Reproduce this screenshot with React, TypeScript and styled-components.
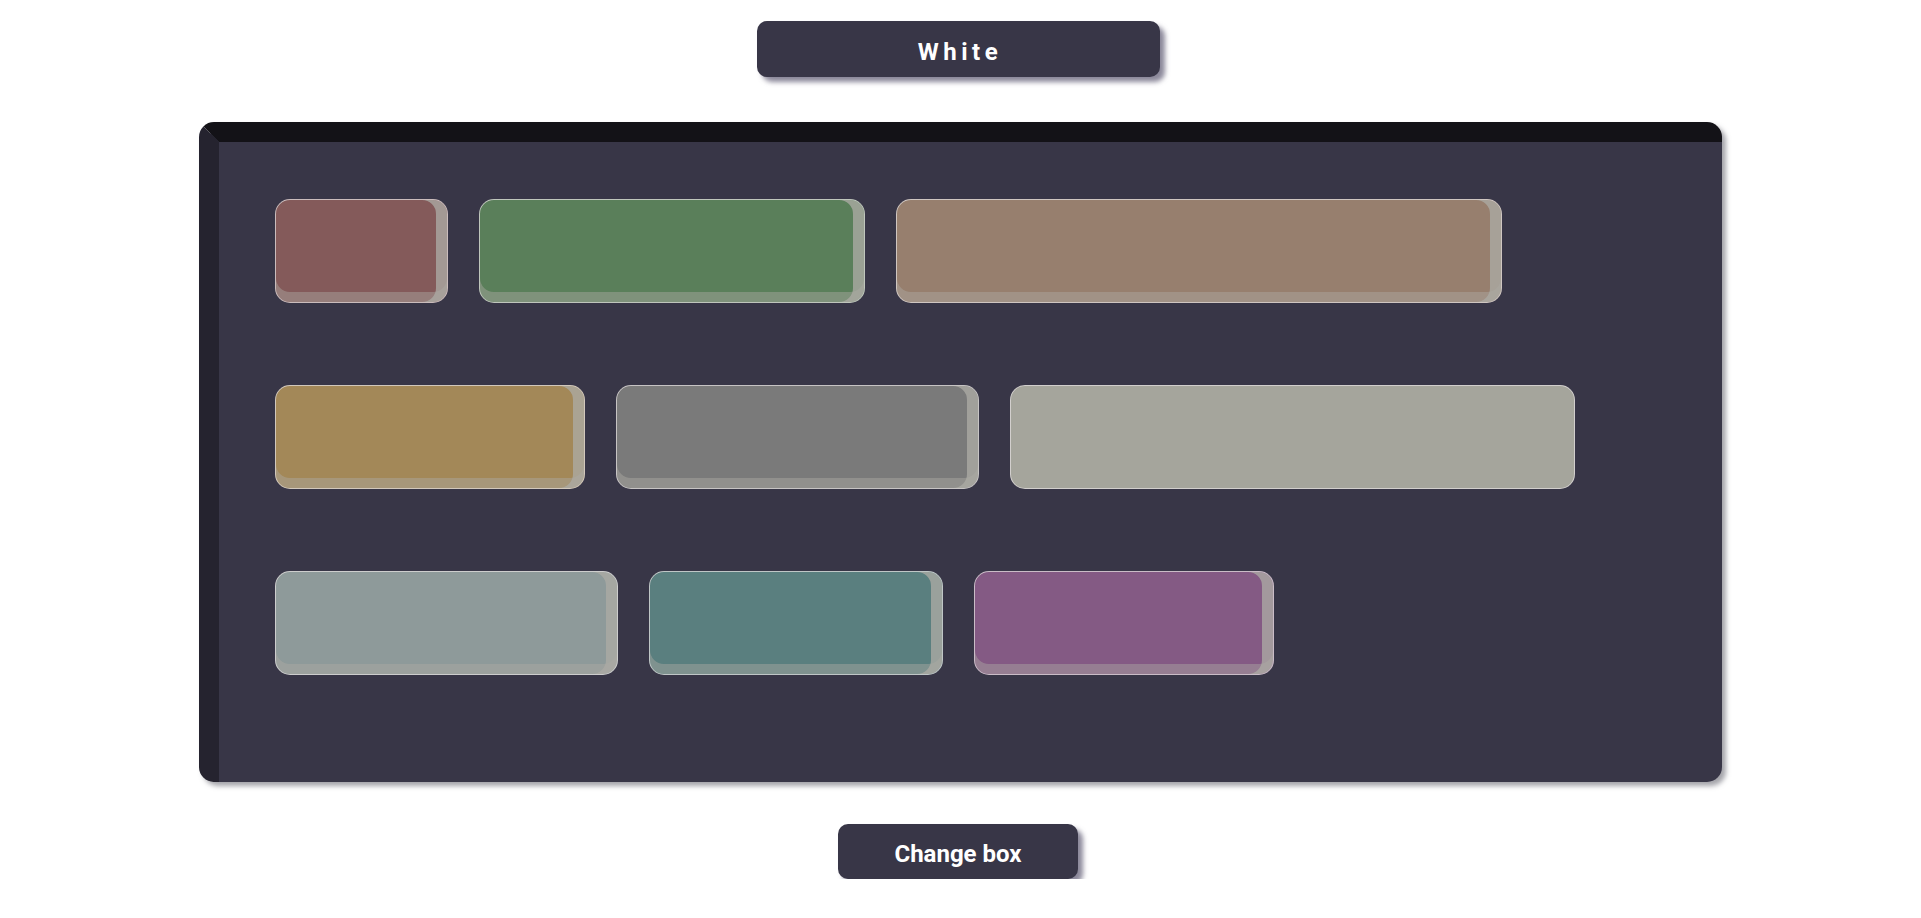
import React from "react";
import styled, { createGlobalStyle } from "styled-components";

const GlobalStyle = createGlobalStyle`
  html, body { margin: 0; padding: 0; background: #ffffff; }
  body { font-family: Roboto, "Liberation Sans", sans-serif; }
`;

const Page = styled.div`
  display: flex;
  flex-direction: column;
  align-items: center;
  padding-top: 21px;
`;

const TopButton = styled.button`
  width: 403px;
  height: 56px;
  margin-right: 5px;
  padding: 5px 0 0 4px;
  border: none;
  border-radius: 10px;
  background: #383647;
  color: #ffffff;
  font-family: Roboto, "Liberation Sans", sans-serif;
  font-weight: 700;
  font-size: 24px;
  letter-spacing: 4.5px;
  box-shadow: 5px 5px 5px rgba(100, 96, 120, 0.75);
  cursor: pointer;
`;

const Panel = styled.div`
  box-sizing: border-box;
  width: 1523px;
  height: 660px;
  margin-top: 45px;
  background: #383647;
  border-top: 20px solid #131217;
  border-left: 20px solid #25232f;
  border-radius: 15px;
  box-shadow: 4px 4px 5px rgba(90, 90, 100, 0.55);
  padding: 57px 56px 0;
  display: flex;
  flex-direction: column;
  gap: 82px;
`;

const Row = styled.div`
  display: flex;
  gap: 31px;
`;

const Box = styled.div<{ $w: number; $c: string; $flat?: boolean }>`
  box-sizing: border-box;
  width: ${(p) => p.$w}px;
  height: 104px;
  border-radius: 15px;
  background: ${(p) => p.$c};
  border: 1px solid rgba(225, 222, 222, 0.75);
  box-shadow: ${(p) =>
    p.$flat
      ? "none"
      : "inset -11px 0 0 rgba(172, 170, 164, 0.78), inset 0 -10px 0 rgba(172, 170, 164, 0.45)"};
`;

const BottomButton = styled.button`
  width: 240px;
  height: 55px;
  margin-top: 42px;
  margin-right: 5px;
  padding: 5px 0 0;
  border: none;
  border-radius: 10px;
  background: #383647;
  color: #ffffff;
  font-family: Roboto, "Liberation Sans", sans-serif;
  font-weight: 700;
  font-size: 24px;
  box-shadow: 5px 5px 5px rgba(100, 96, 120, 0.75);
  cursor: pointer;
`;

const rows: { w: number; c: string; flat?: boolean }[][] = [
  [
    { w: 173, c: "#845a5a" },
    { w: 386, c: "#5a7f5a" },
    { w: 606, c: "#977f6e" },
  ],
  [
    { w: 310, c: "#a38858" },
    { w: 363, c: "#7a7a7a" },
    { w: 565, c: "#a5a59c", flat: true },
  ],
  [
    { w: 343, c: "#8e9a9a" },
    { w: 294, c: "#5a7f7f" },
    { w: 300, c: "#845a84" },
  ],
];

export default function App() {
  return (
    <>
      <GlobalStyle />
      <Page>
        <TopButton>White</TopButton>
        <Panel>
          {rows.map((r, i) => (
            <Row key={i}>
              {r.map((b, j) => (
                <Box key={j} $w={b.w} $c={b.c} $flat={b.flat} />
              ))}
            </Row>
          ))}
        </Panel>
        <BottomButton>Change box</BottomButton>
      </Page>
    </>
  );
}
